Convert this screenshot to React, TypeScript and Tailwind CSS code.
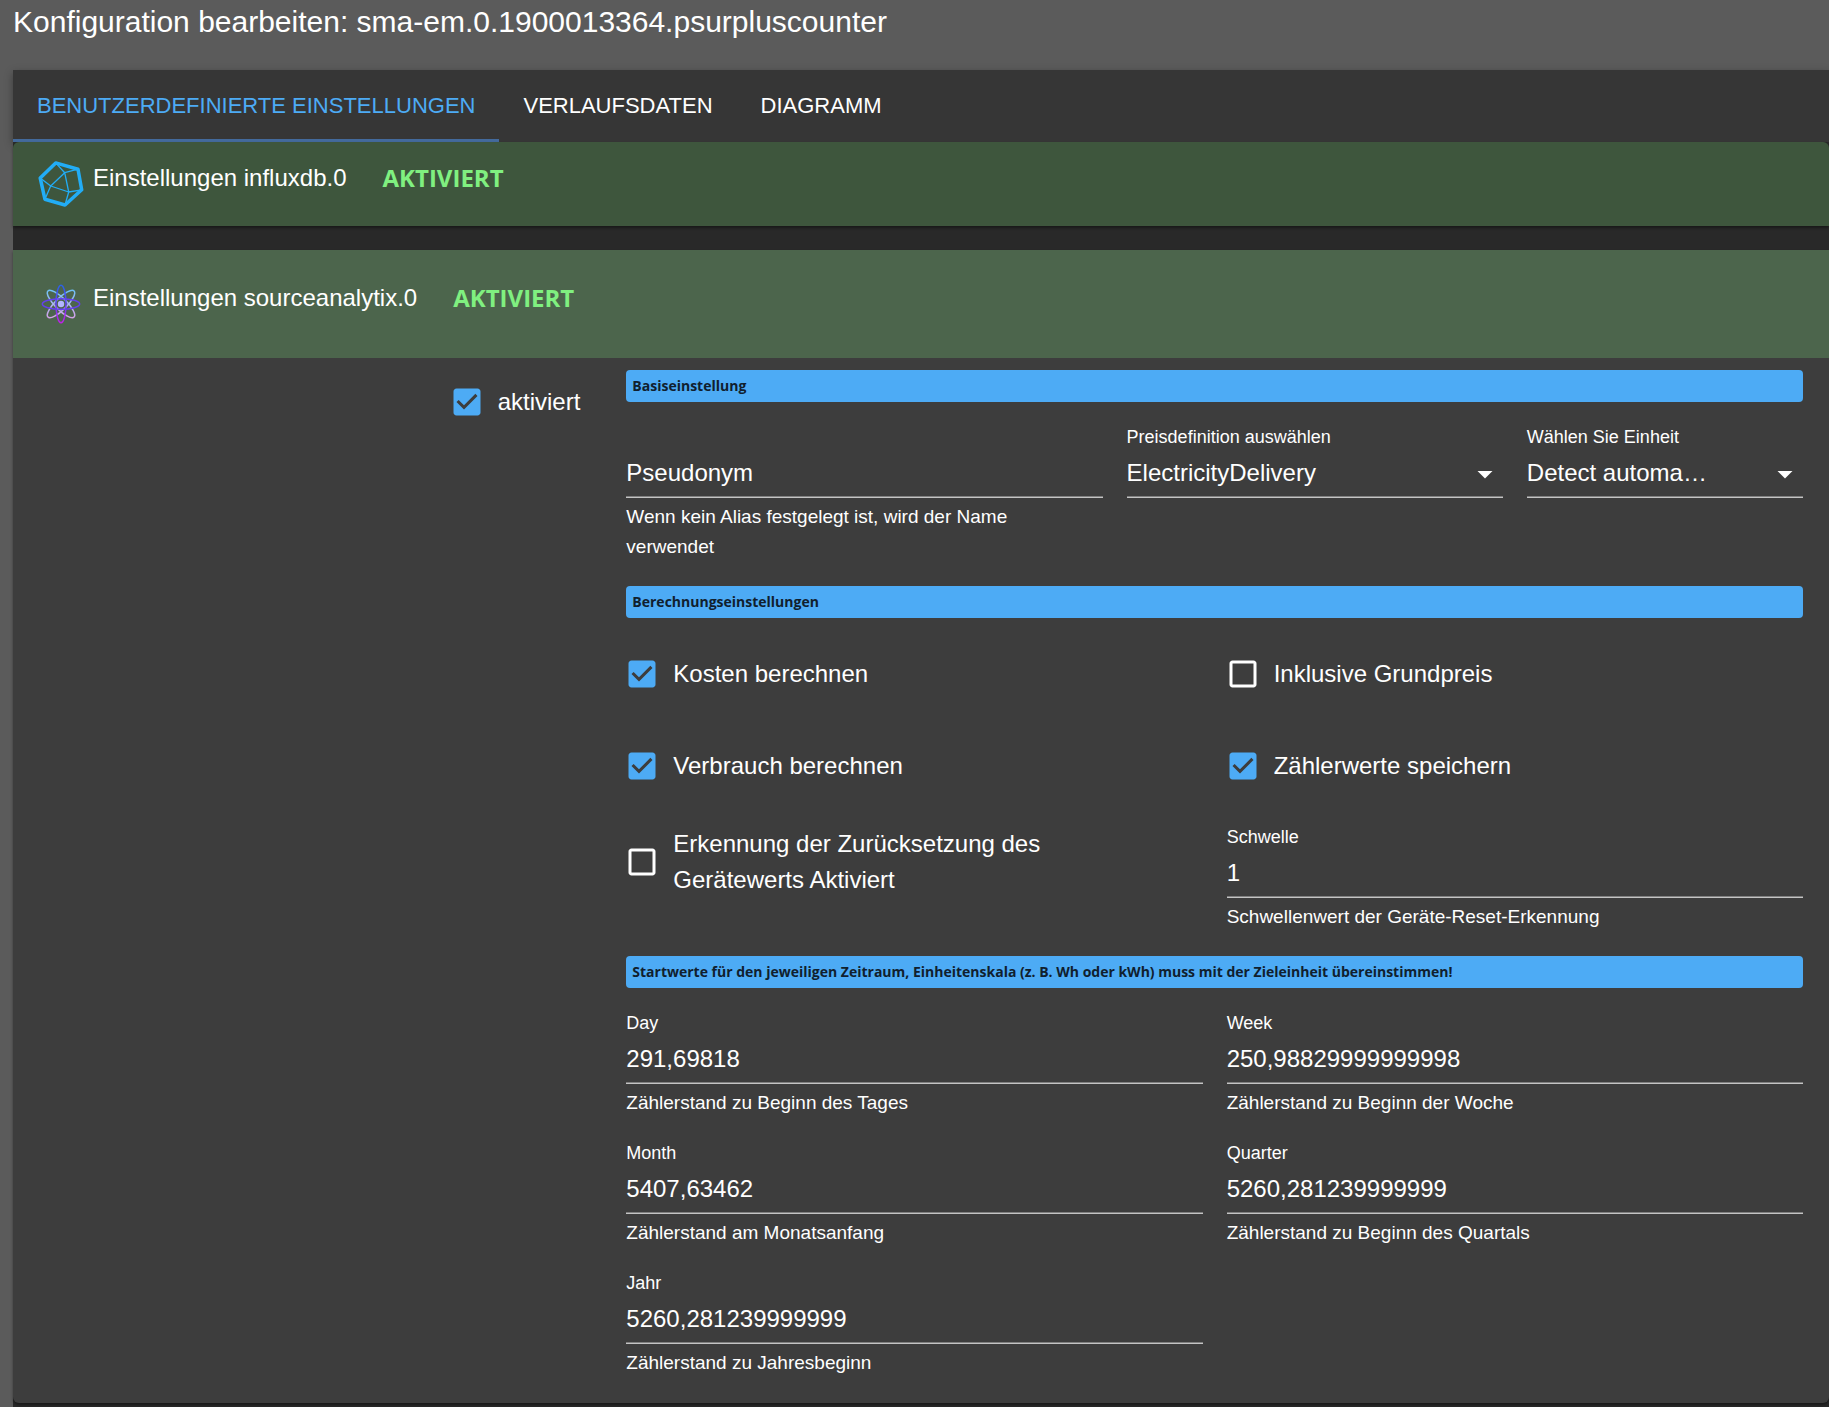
import React, { useId, useState } from 'react';

const TABS = ['BENUTZERDEFINIERTE EINSTELLUNGEN', 'VERLAUFSDATEN', 'DIAGRAMM'];

const InfluxIcon: React.FC = () => (
  <svg viewBox="0 0 48 48" className="size-12 shrink-0" fill="none" stroke="#22adf6" strokeLinejoin="round" aria-hidden="true">
    <path d="M18.7 2.9 41 9.2 44.7 29.8 28 45 7.9 39.2 3.2 18z" strokeWidth="3.5" />
    <path
      d="M27.7 12.7 31.7 32 13.7 26zM18.7 2.9l9 9.8L41 9.2M44.7 29.8l-13 2.2L28 45M7.9 39.2l5.8-13.2L3.2 18"
      strokeWidth="1.3"
    />
  </svg>
);

const SourceIcon: React.FC = () => (
  <svg viewBox="0 0 48 48" className="size-12 shrink-0" fill="none" strokeWidth="1.5" aria-hidden="true">
    <defs>
      <linearGradient id="orbit" gradientUnits="userSpaceOnUse" x1="24" y1="5" x2="24" y2="43">
        <stop offset="0" stopColor="#2a63e8" />
        <stop offset="0.5" stopColor="#6040f0" />
        <stop offset="1" stopColor="#c21fe6" />
      </linearGradient>
      <linearGradient id="orbitLight" gradientUnits="userSpaceOnUse" x1="24" y1="10" x2="24" y2="38">
        <stop offset="0" stopColor="#6cc0f5" />
        <stop offset="0.5" stopColor="#a9b4f0" />
        <stop offset="1" stopColor="#d3a0e8" />
      </linearGradient>
      <linearGradient id="orbitRight" href="#orbitLight" gradientTransform="rotate(-45 24 24)" />
      <linearGradient id="orbitLeft" href="#orbitLight" gradientTransform="rotate(45 24 24)" />
    </defs>
    <ellipse cx="24" cy="24" rx="18.5" ry="5.8" stroke="url(#orbitRight)" transform="rotate(45 24 24)" />
    <ellipse cx="24" cy="24" rx="18.5" ry="5.8" stroke="url(#orbitLeft)" transform="rotate(-45 24 24)" />
    <ellipse cx="24" cy="24" rx="5" ry="18.7" stroke="url(#orbit)" />
    <ellipse cx="24" cy="24" rx="18.7" ry="5.3" stroke="#6440ee" />
    <circle cx="24" cy="24" r="3.2" fill="#b3b4ff" />
  </svg>
);

const SectionBar: React.FC<{ children: React.ReactNode }> = ({ children }) => (
  <h3 className="col-span-12 rounded bg-[#4dabf5] px-1.5 font-['Open_Sans',sans-serif] text-sm leading-8 font-bold text-[#10202e]">
    {children}
  </h3>
);

const Checkbox: React.FC<{ label: string; defaultChecked?: boolean }> = ({ label, defaultChecked = false }) => {
  const [checked, setChecked] = useState(defaultChecked);
  return (
    <label className="mb-1 -ml-0.5 flex min-h-16 items-center gap-[13px] pr-12 text-2xl leading-9">
      <span className="relative size-9 shrink-0">
        <input
          type="checkbox"
          checked={checked}
          onChange={(e) => setChecked(e.target.checked)}
          className="absolute inset-0 size-9 appearance-none opacity-0"
        />
        <svg viewBox="0 0 24 24" className="size-9" fill={checked ? '#4dabf5' : '#ffffff'} aria-hidden="true">
          {checked ? (
            <path d="M19 3H5c-1.11 0-2 .9-2 2v14c0 1.1.89 2 2 2h14c1.11 0 2-.9 2-2V5c0-1.1-.89-2-2-2zm-9 14l-5-5 1.41-1.41L10 14.17l7.59-7.59L19 8l-9 9z" />
          ) : (
            <path d="M19 5v14H5V5h14m0-2H5c-1.1 0-2 .9-2 2v14c0 1.1.9 2 2 2h14c1.1 0 2-.9 2-2V5c0-1.1-.9-2-2-2z" />
          )}
        </svg>
      </span>
      {label}
    </label>
  );
};

interface TextFieldProps {
  label: string;
  value?: string;
  helper: string;
}

const TextField: React.FC<TextFieldProps> = ({ label, value, helper }) => {
  const id = useId();
  return (
    <div>
      {value ? (
        <label htmlFor={id} className="block text-lg leading-[22px]">{label}</label>
      ) : (
        <div className="h-[22px]"></div>
      )}
      <input
        id={id}
        type="text"
        defaultValue={value}
        aria-label={value ? undefined : label}
        placeholder={value ? undefined : label}
        className="block h-[50px] w-full border-b border-[#c4c4c4] bg-transparent pt-px text-2xl shadow-[inset_0_-1px_0_#808080] outline-none placeholder:text-white"
      />
      <p className="mt-1 pr-6 text-[19px] leading-[30px]">{helper}</p>
    </div>
  );
};

const SelectField: React.FC<{ label: string; options: string[] }> = ({ label, options }) => {
  const id = useId();
  return (
    <div>
      <label htmlFor={id} className="block text-lg leading-[22px]">{label}</label>
      <div className="relative">
        <select
          id={id}
          className="block h-[50px] w-full appearance-none border-b border-[#c4c4c4] bg-transparent pt-px pr-9 text-2xl shadow-[inset_0_-1px_0_#808080] outline-none"
        >
          {options.map((option) => (
            <option key={option}>{option}</option>
          ))}
        </select>
        <svg viewBox="0 0 24 24" className="pointer-events-none absolute top-2 right-0 size-9" fill="#ffffff" aria-hidden="true">
          <path d="M7 10l5 5 5-5z" />
        </svg>
      </div>
    </div>
  );
};

const App: React.FC = () => {
  const [tab, setTab] = useState(0);

  return (
    <div className="flex min-h-screen flex-col bg-[#5b5b5b] pl-[13px] font-['Liberation_Sans',Arial,sans-serif] text-white">
      <h1 className="h-[70px] text-[30px] leading-[44px]">
        Konfiguration bearbeiten: sma-em.0.1900013364.psurpluscounter
      </h1>

      <nav className="flex h-[72px] bg-[#363636] shadow-[0_3px_8px_rgba(0,0,0,0.35)]">
        {TABS.map((name, i) => (
          <button
            key={name}
            type="button"
            onClick={() => setTab(i)}
            className={
              i === tab
                ? 'border-b-[3px] border-[#436a9c] px-6 pt-px text-[22px] text-[#4dabf5]'
                : 'border-b-[3px] border-transparent px-6 pt-px text-[22px]'
            }
          >
            {name}
          </button>
        ))}
      </nav>

      <main className="relative flex-1 bg-[#292929]">
        <button
          type="button"
          className="flex w-full items-start rounded-t-md bg-[#3e563d] px-6 py-[18px] text-left text-2xl leading-9 shadow-[0_2px_3px_rgba(0,0,0,0.4)]"
        >
          <InfluxIcon />
          <span className="ml-2">Einstellungen influxdb.0</span>
          <span className="ml-9 font-['Open_Sans',sans-serif] font-bold text-[#80f080]">AKTIVIERT</span>
        </button>

        <section className="mt-6 rounded-b-md bg-[#3d3d3d] shadow-[0_2px_3px_rgba(0,0,0,0.4)]">
          <button type="button" className="flex w-full items-start bg-[#4c654c] px-6 py-[30px] text-left text-2xl leading-9">
            <SourceIcon />
            <span className="ml-2">Einstellungen sourceanalytix.0</span>
            <span className="ml-9 font-['Open_Sans',sans-serif] font-bold text-[#80f080]">AKTIVIERT</span>
          </button>

          <div className="flex pt-3 pb-[25px]">
            <div className="flex w-1/3 items-start justify-end">
              <div className="-mr-2.5">
                <Checkbox label="aktiviert" defaultChecked />
              </div>
            </div>
            <div className="grid w-2/3 grid-cols-12 items-start gap-6 pr-[26px] pl-2">
              <SectionBar>Basiseinstellung</SectionBar>
              <div className="col-span-5">
                <TextField label="Pseudonym" helper="Wenn kein Alias festgelegt ist, wird der Name verwendet" />
              </div>
              <div className="col-span-4">
                <SelectField label="Preisdefinition auswählen" options={['ElectricityDelivery']} />
              </div>
              <div className="col-span-3">
                <SelectField label="Wählen Sie Einheit" options={['Detect automa…']} />
              </div>

              <SectionBar>Berechnungseinstellungen</SectionBar>
              <div className="col-span-6">
                <Checkbox label="Kosten berechnen" defaultChecked />
              </div>
              <div className="col-span-6">
                <Checkbox label="Inklusive Grundpreis" />
              </div>
              <div className="col-span-6">
                <Checkbox label="Verbrauch berechnen" defaultChecked />
              </div>
              <div className="col-span-6">
                <Checkbox label="Zählerwerte speichern" defaultChecked />
              </div>
              <div className="col-span-6">
                <Checkbox label="Erkennung der Zurücksetzung des Gerätewerts Aktiviert" />
              </div>
              <div className="col-span-6">
                <TextField label="Schwelle" value="1" helper="Schwellenwert der Geräte-Reset-Erkennung" />
              </div>

              <SectionBar>
                Startwerte für den jeweiligen Zeitraum, Einheitenskala (z. B. Wh oder kWh) muss mit der Zieleinheit übereinstimmen!
              </SectionBar>
              <div className="col-span-6">
                <TextField label="Day" value="291,69818" helper="Zählerstand zu Beginn des Tages" />
              </div>
              <div className="col-span-6">
                <TextField label="Week" value="250,98829999999998" helper="Zählerstand zu Beginn der Woche" />
              </div>
              <div className="col-span-6">
                <TextField label="Month" value="5407,63462" helper="Zählerstand am Monatsanfang" />
              </div>
              <div className="col-span-6">
                <TextField label="Quarter" value="5260,281239999999" helper="Zählerstand zu Beginn des Quartals" />
              </div>
              <div className="col-span-6">
                <TextField label="Jahr" value="5260,281239999999" helper="Zählerstand zu Jahresbeginn" />
              </div>
            </div>
          </div>
        </section>
      </main>
    </div>
  );
};

export default App;
